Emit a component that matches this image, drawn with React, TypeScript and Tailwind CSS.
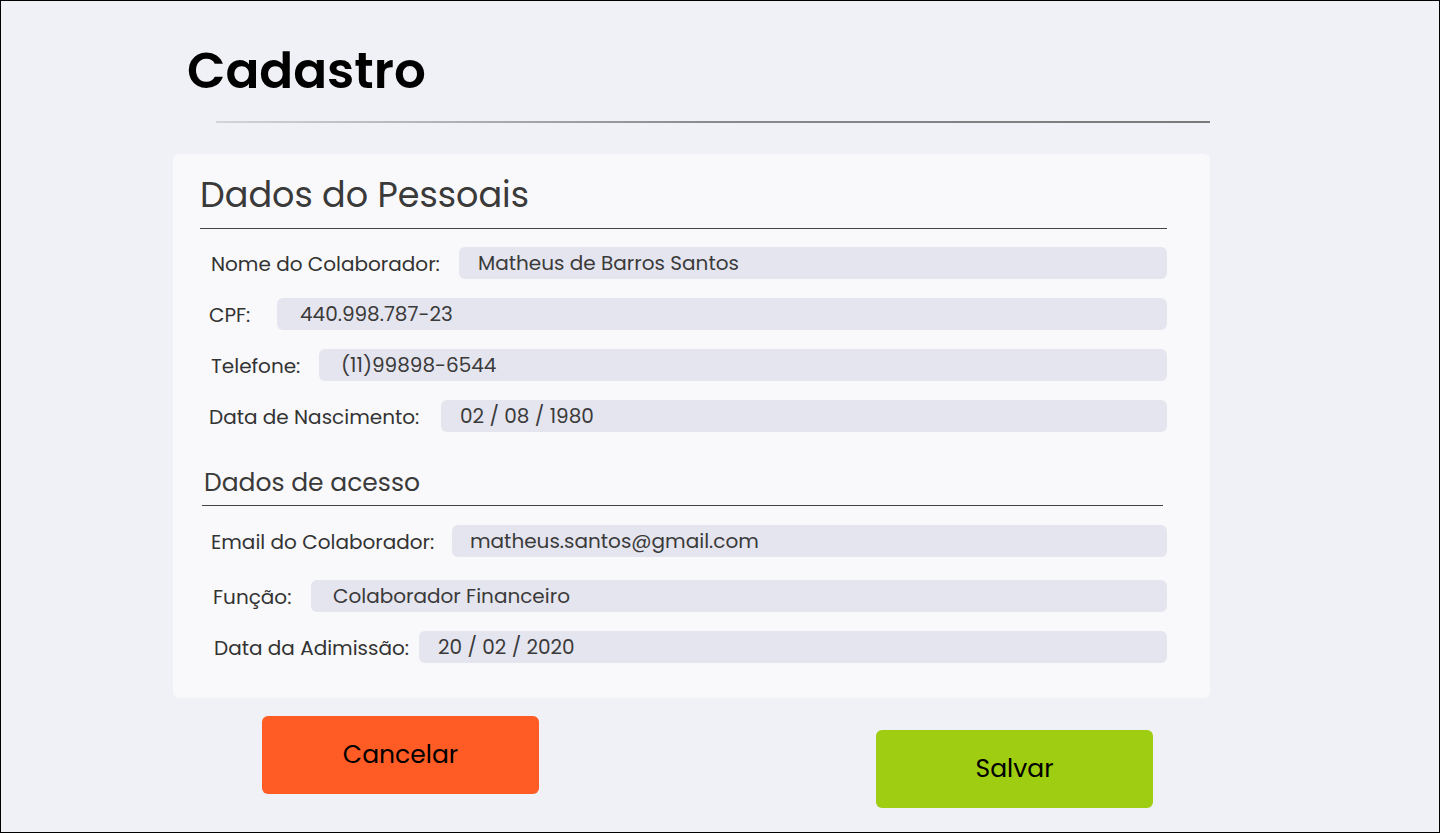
const font = { fontFamily: "Poppins, Inter, 'Noto Sans', sans-serif" };

type Field = { label: string; value: string; labelPad: number; labelW: number; valuePad: number; gapTop: number };

const pessoais: Field[] = [
  { label: "Nome do Colaborador:", value: "Matheus de Barros Santos", labelPad: 11, labelW: 259, valuePad: 19, gapTop: 18 },
  { label: "CPF:", value: "440.998.787-23", labelPad: 9, labelW: 77, valuePad: 23, gapTop: 19 },
  { label: "Telefone:", value: "(11)99898-6544", labelPad: 11, labelW: 119, valuePad: 22, gapTop: 19 },
  { label: "Data de Nascimento:", value: "02 / 08 / 1980", labelPad: 9, labelW: 241, valuePad: 19, gapTop: 19 },
];

const acesso: Field[] = [
  { label: "Email do Colaborador:", value: "matheus.santos@gmail.com", labelPad: 11, labelW: 252, valuePad: 18, gapTop: 19 },
  { label: "Função:", value: "Colaborador Financeiro", labelPad: 13, labelW: 111, valuePad: 22, gapTop: 23 },
  { label: "Data da Adimissão:", value: "20 / 02 / 2020", labelPad: 14, labelW: 219, valuePad: 19, gapTop: 19 },
];

function Row({ f }: { f: Field }) {
  return (
    <div className="flex h-8 items-center" style={{ marginTop: f.gapTop }}>
      <div
        className="flex h-8 shrink-0 items-center whitespace-nowrap pt-[2px] text-[20px] leading-none text-[#333333]"
        style={{ paddingLeft: f.labelPad, width: f.labelW }}
      >
        {f.label}
      </div>
      <div
        className="flex h-8 flex-1 items-center rounded-md bg-[#e5e5ef] text-[20px] leading-none text-[#3a3a3a]"
        style={{ paddingLeft: f.valuePad }}
      >
        {f.value}
      </div>
    </div>
  );
}

export default function App() {
  return (
    <div className="h-[833px] w-[1440px] border border-black bg-[#f0f1f6]" style={font}>
      <div className="pl-[186px] pt-[42px]">
        <h1 className="text-[50px] font-semibold leading-[56px] text-black">Cadastro</h1>
      </div>
      <div className="ml-[215px] mt-[22px] h-[2px] w-[994px] bg-gradient-to-r from-[#d4d4d8] via-[#8a8a8e] to-[#7a7a7a]" />

      <div className="ml-[172px] mt-[31px] w-[1037px] rounded-md bg-[#f9f9fb] pb-[35px] pl-[27px] pr-[43px] pt-[21px]">
        <h2 className="text-[35px] leading-[40px] text-[#3a3a3a]">Dados do Pessoais</h2>
        <div className="mt-[13px] h-px bg-[#444444]" />
        {pessoais.map((f) => (
          <Row key={f.label} f={f} />
        ))}

        <h3 className="ml-1 mt-[35px] text-[25px] leading-[32px] text-[#3a3a3a]">Dados de acesso</h3>
        <div className="ml-[2px] mr-1 mt-[6px] h-px bg-[#444444]" />
        {acesso.map((f) => (
          <Row key={f.label} f={f} />
        ))}
      </div>

      <div className="flex items-start">
        <button className="ml-[261px] mt-[18px] flex h-[78px] w-[277px] items-center justify-center rounded-md bg-[#ff5b25] text-[25px] text-black">
          Cancelar
        </button>
        <button className="ml-[337px] mt-[32px] flex h-[78px] w-[277px] items-center justify-center rounded-md bg-[#9ecd12] text-[25px] text-black">
          Salvar
        </button>
      </div>
    </div>
  );
}
